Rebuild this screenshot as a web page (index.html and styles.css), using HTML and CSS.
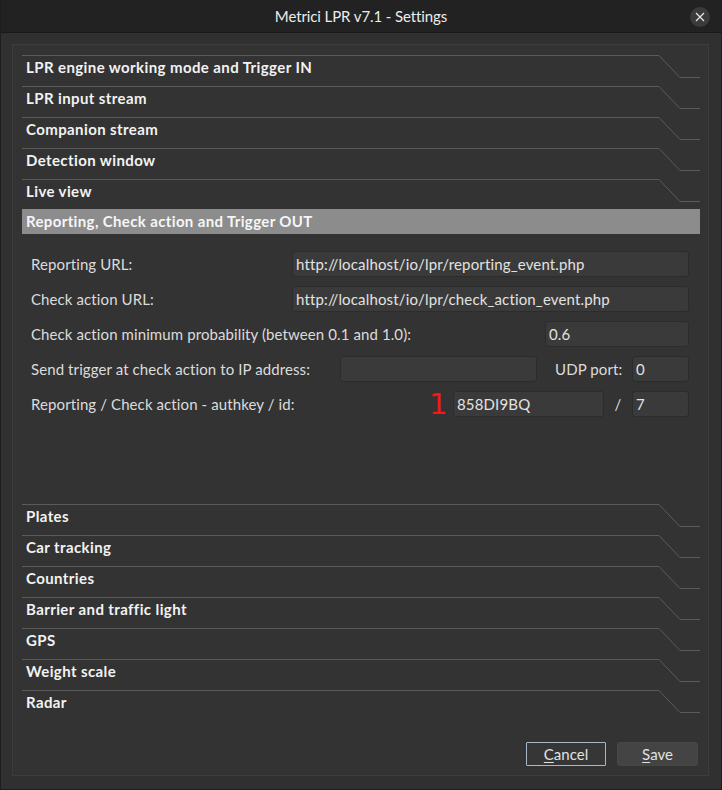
FILE: index.html
```html
<!DOCTYPE html>
<html lang="en">
<head>
<meta charset="utf-8">
<title>Metrici LPR v7.1 - Settings</title>
<link rel="stylesheet" href="styles.css">
</head>
<body>
<div class="window">
  <header class="titlebar">
    <span class="title">Metrici LPR v7.1 - Settings</span>
    <button class="close" aria-label="Close">
      <svg width="10" height="10" viewBox="0 0 10 10"><path d="M1 1 L9 9 M9 1 L1 9" stroke="#e6e6e6" stroke-width="1.2" fill="none"/></svg>
    </button>
  </header>

  <div class="frame">
    <div class="tab"><span class="tab-label">LPR engine working mode and Trigger IN</span><svg class="tail" width="41" height="31" viewBox="0 0 41 31"><polyline points="0,0.5 21,22.5 41,22.5" /></svg></div>
    <div class="tab"><span class="tab-label">LPR input stream</span><svg class="tail" width="41" height="31" viewBox="0 0 41 31"><polyline points="0,0.5 21,22.5 41,22.5" /></svg></div>
    <div class="tab"><span class="tab-label">Companion stream</span><svg class="tail" width="41" height="31" viewBox="0 0 41 31"><polyline points="0,0.5 21,22.5 41,22.5" /></svg></div>
    <div class="tab"><span class="tab-label">Detection window</span><svg class="tail" width="41" height="31" viewBox="0 0 41 31"><polyline points="0,0.5 21,22.5 41,22.5" /></svg></div>
    <div class="tab"><span class="tab-label">Live view</span><svg class="tail" width="41" height="31" viewBox="0 0 41 31"><polyline points="0,0.5 21,22.5 41,22.5" /></svg></div>
    <div class="tab-active">Reporting, Check action and Trigger OUT</div>

    <section class="panel">
      <div class="row">
        <label class="lbl">Reporting URL:</label>
        <div class="field w-url">http://localhost/io/lpr/reporting_event.php</div>
      </div>
      <div class="row">
        <label class="lbl">Check action URL:</label>
        <div class="field w-url">http://localhost/io/lpr/check_action_event.php</div>
      </div>
      <div class="row">
        <label class="lbl">Check action minimum probability (between 0.1 and 1.0):</label>
        <div class="field w-prob">0.6</div>
      </div>
      <div class="row">
        <label class="lbl">Send trigger at check action to IP address:</label>
        <div class="field w-ip"></div>
        <span class="udp">UDP port:</span>
        <div class="field w-small">0</div>
      </div>
      <div class="row">
        <label class="lbl">Reporting / Check action - authkey / id:</label>
        <span class="marker">1</span>
        <div class="field w-key">858DI9BQ</div>
        <span class="slash">/</span>
        <div class="field w-small">7</div>
      </div>
    </section>

    <div class="tab"><span class="tab-label">Plates</span><svg class="tail" width="41" height="31" viewBox="0 0 41 31"><polyline points="0,0.5 21,22.5 41,22.5" /></svg></div>
    <div class="tab"><span class="tab-label">Car tracking</span><svg class="tail" width="41" height="31" viewBox="0 0 41 31"><polyline points="0,0.5 21,22.5 41,22.5" /></svg></div>
    <div class="tab"><span class="tab-label">Countries</span><svg class="tail" width="41" height="31" viewBox="0 0 41 31"><polyline points="0,0.5 21,22.5 41,22.5" /></svg></div>
    <div class="tab"><span class="tab-label">Barrier and traffic light</span><svg class="tail" width="41" height="31" viewBox="0 0 41 31"><polyline points="0,0.5 21,22.5 41,22.5" /></svg></div>
    <div class="tab"><span class="tab-label">GPS</span><svg class="tail" width="41" height="31" viewBox="0 0 41 31"><polyline points="0,0.5 21,22.5 41,22.5" /></svg></div>
    <div class="tab"><span class="tab-label">Weight scale</span><svg class="tail" width="41" height="31" viewBox="0 0 41 31"><polyline points="0,0.5 21,22.5 41,22.5" /></svg></div>
    <div class="tab"><span class="tab-label">Radar</span><svg class="tail" width="41" height="31" viewBox="0 0 41 31"><polyline points="0,0.5 21,22.5 41,22.5" /></svg></div>

    <div class="buttons">
      <button class="btn btn-focus"><u>C</u>ancel</button>
      <button class="btn"><u>S</u>ave</button>
    </div>
  </div>
</div>
</body>
</html>
```

FILE: styles.css
```css
html, body {
  margin: 0;
  padding: 0;
  background: #303030;
}

body {
  font-family: Lato, "Noto Sans", sans-serif;
  color: #dedede;
}

.window {
  width: 722px;
  height: 790px;
  box-sizing: border-box;
  border-left: 1px solid #1e1e1e;
  border-right: 1px solid #1e1e1e;
  border-bottom: 1px solid #1e1e1e;
  background: #303030;
}

/* window title bar */
.titlebar {
  height: 33px;
  box-sizing: border-box;
  background: #222222;
  border-bottom: 1px solid #191919;
  display: flex;
  align-items: center;
  justify-content: center;
  position: relative;
}

.title {
  font-size: 15px;
  color: #ececec;
  letter-spacing: -0.1px;
}

.close {
  position: absolute;
  right: 11px;
  top: 7px;
  width: 20px;
  height: 20px;
  border: none;
  border-radius: 50%;
  background: #3b3b3b;
  padding: 0;
  display: flex;
  align-items: center;
  justify-content: center;
}

/* settings toolbox */
.frame {
  margin: 11px 12px 0 11px;
  width: 697px;
  height: 732px;
  box-sizing: border-box;
  border: 1px solid #3c3c3c;
  background: #333333;
  padding: 10px 8px 0 9px;
  display: flex;
  flex-direction: column;
}

.tab {
  height: 31px;
  display: flex;
  flex-shrink: 0;
}

.tab-label {
  flex: 1;
  border-top: 1px solid #5b5b5b;
  box-sizing: border-box;
  height: 31px;
  padding-left: 4px;
  line-height: 22px;
  font-size: 15px;
  font-weight: 700;
  letter-spacing: 0.4px;
  color: #f2f2f2;
}

.tail {
  display: block;
  flex-shrink: 0;
}

.tail polyline {
  fill: none;
  stroke: #5b5b5b;
  stroke-width: 1;
}

.tab-active {
  margin-top: -1px;
  height: 25px;
  flex-shrink: 0;
  background: #8c8c8c;
  padding-left: 4px;
  line-height: 25px;
  font-size: 15px;
  font-weight: 700;
  letter-spacing: 0.36px;
  color: #f6f6f6;
}

/* active page */
.panel {
  height: 270px;
  flex-shrink: 0;
  box-sizing: border-box;
  padding: 17px 11px 0 9px;
  display: flex;
  flex-direction: column;
  gap: 9px;
}

.row {
  height: 26px;
  display: flex;
  align-items: center;
}

.lbl {
  margin-right: auto;
  font-size: 15px;
  letter-spacing: 0.1px;
  color: #dcdcdc;
  white-space: nowrap;
}

.field {
  flex-shrink: 0;
  height: 26px;
  box-sizing: border-box;
  background: #3a3a3a;
  border: 1px solid #2c2c2c;
  border-radius: 3px;
  padding: 0 3px;
  line-height: 24px;
  font-size: 15px;
  letter-spacing: 0.15px;
  color: #e2e2e2;
  white-space: nowrap;
  overflow: hidden;
}

.w-url { width: 397px; }
.w-prob { width: 144px; }
.w-ip { width: 197px; }
.w-key { width: 151px; }
.w-small { width: 57px; }

.udp {
  flex-shrink: 0;
  width: 95px;
  box-sizing: border-box;
  padding-left: 18px;
  font-size: 15px;
  letter-spacing: 0.1px;
  color: #dcdcdc;
  white-space: nowrap;
}

.marker {
  flex-shrink: 0;
  width: 24px;
  font-family: "DejaVu Sans", sans-serif;
  font-size: 29px;
  line-height: 26px;
  color: #ff1414;
}

.slash {
  flex-shrink: 0;
  width: 28px;
  text-align: center;
  font-size: 15px;
  color: #dcdcdc;
}

/* dialog buttons */
.buttons {
  margin-top: 21px;
  display: flex;
  justify-content: flex-end;
  gap: 11px;
  padding-right: 2px;
}

.btn {
  height: 24px;
  width: 80px;
  box-sizing: border-box;
  border: 1px solid #474747;
  border-radius: 3px;
  background: #444444;
  font-family: Lato, "Noto Sans", sans-serif;
  font-size: 15px;
  color: #e2e2e2;
  padding: 0;
}

.btn + .btn {
  width: 81px;
}

.btn-focus {
  background: #363636;
  border: 1px solid #a7b8c9;
  border-radius: 1px;
}

.btn u {
  text-underline-offset: 2px;
}
```
